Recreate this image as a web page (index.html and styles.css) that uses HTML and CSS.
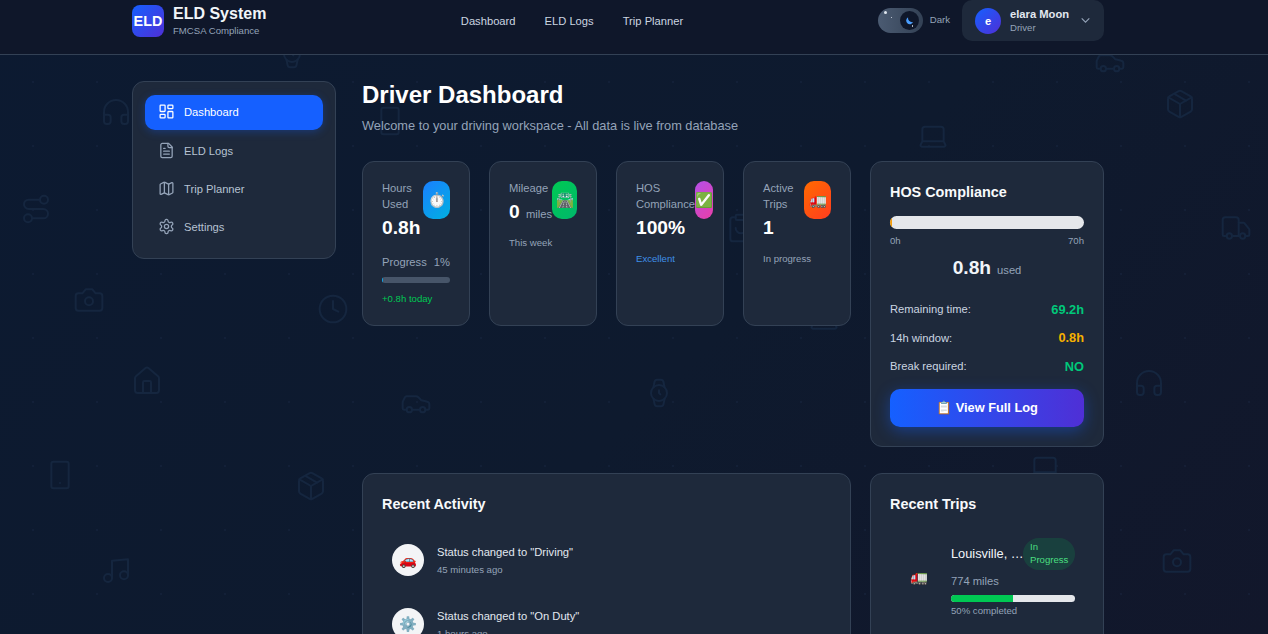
FILE: index.html
```html
<!DOCTYPE html>
<html lang="en">
<head>
<meta charset="utf-8">
<title>ELD System</title>
<link rel="stylesheet" href="styles.css">
</head>
<body>
<svg class="defs" width="0" height="0" aria-hidden="true">
  <symbol id="i-headphones" viewBox="0 0 24 24"><path d="M3 14h3a2 2 0 0 1 2 2v3a2 2 0 0 1-2 2H5a2 2 0 0 1-2-2v-7a9 9 0 0 1 18 0v7a2 2 0 0 1-2 2h-1a2 2 0 0 1-2-2v-3a2 2 0 0 1 2-2h3"/></symbol>
  <symbol id="i-box" viewBox="0 0 24 24"><path d="M21 8a2 2 0 0 0-1-1.73l-7-4a2 2 0 0 0-2 0l-7 4A2 2 0 0 0 3 8v8a2 2 0 0 0 1 1.73l7 4a2 2 0 0 0 2 0l7-4A2 2 0 0 0 21 16Z"/><path d="m3.3 7 8.7 5 8.7-5"/><path d="M12 22V12"/><path d="m7.5 4.27 9 5.15"/></symbol>
  <symbol id="i-route" viewBox="0 0 24 24"><circle cx="6" cy="19" r="3"/><path d="M9 19h8.5a3.5 3.5 0 0 0 0-7h-11a3.5 3.5 0 0 1 0-7H15"/><circle cx="18" cy="5" r="3"/></symbol>
  <symbol id="i-truck" viewBox="0 0 24 24"><path d="M14 18V6a2 2 0 0 0-2-2H4a2 2 0 0 0-2 2v11a1 1 0 0 0 1 1h2"/><path d="M15 18H9"/><path d="M19 18h2a1 1 0 0 0 1-1v-3.65a1 1 0 0 0-.22-.624l-3.48-4.35A1 1 0 0 0 17.52 8H14"/><circle cx="17" cy="18" r="2"/><circle cx="7" cy="18" r="2"/></symbol>
  <symbol id="i-camera" viewBox="0 0 24 24"><path d="M14.5 4h-5L7 7H4a2 2 0 0 0-2 2v9a2 2 0 0 0 2 2h16a2 2 0 0 0 2-2V9a2 2 0 0 0-2-2h-3l-2.5-3z"/><circle cx="12" cy="13" r="3"/></symbol>
  <symbol id="i-clock" viewBox="0 0 24 24"><circle cx="12" cy="12" r="10"/><path d="M12 6v6l4 2"/></symbol>
  <symbol id="i-clipboard" viewBox="0 0 24 24"><path d="M8 4H6a2 2 0 0 0-2 2v14a2 2 0 0 0 2 2h12a2 2 0 0 0 2-2V6a2 2 0 0 0-2-2h-2"/><rect x="8" y="2" width="8" height="4" rx="1"/><path d="M16 12a4 4 0 0 1-8 0"/></symbol>
  <symbol id="i-home" viewBox="0 0 24 24"><path d="M15 21v-8a1 1 0 0 0-1-1h-4a1 1 0 0 0-1 1v8"/><path d="M3 10a2 2 0 0 1 .709-1.528l7-5.999a2 2 0 0 1 2.582 0l7 5.999A2 2 0 0 1 21 10v9a2 2 0 0 1-2 2H5a2 2 0 0 1-2-2z"/></symbol>
  <symbol id="i-car" viewBox="0 0 24 24"><path d="M19 17h2c.6 0 1-.4 1-1v-3c0-.9-.7-1.7-1.5-1.9C18.7 10.6 16 10 16 10s-1.3-1.4-2.2-2.3c-.5-.4-1.1-.7-1.8-.7H5c-.6 0-1.1.4-1.4.9l-1.4 2.9A3.7 3.7 0 0 0 2 12v4c0 .6.4 1 1 1h2"/><circle cx="7" cy="17" r="2"/><path d="M9 17h6"/><circle cx="17" cy="17" r="2"/></symbol>
  <symbol id="i-watch" viewBox="0 0 24 24"><circle cx="12" cy="12" r="6"/><path d="M12 10v2l1 1"/><path d="m16.13 7.66-.81-4.05a2 2 0 0 0-2-1.61h-2.68a2 2 0 0 0-2 1.61l-.78 4.05"/><path d="m7.88 16.36.8 4a2 2 0 0 0 2 1.61h2.72a2 2 0 0 0 2-1.61l.81-4.05"/></symbol>
  <symbol id="i-phone" viewBox="0 0 24 24"><rect x="5.5" y="2" width="13" height="20" rx="1.5"/><path d="M12 18h.01"/></symbol>
  <symbol id="i-music" viewBox="0 0 24 24"><path d="M9 18V5l12-1v12"/><circle cx="6" cy="18" r="3"/><circle cx="18" cy="16" r="3"/></symbol>
  <symbol id="i-laptop" viewBox="0 0 24 24"><path d="M20 16V7a2 2 0 0 0-2-2H6a2 2 0 0 0-2 2v9m16 0H4m16 0 1.28 2.55a1 1 0 0 1-.9 1.45H3.62a1 1 0 0 1-.9-1.45L4 16"/></symbol>
</svg>

<div class="bg-icons" aria-hidden="true">
  <svg class="bgi p1"><use href="#i-watch"/></svg>
  <svg class="bgi p2"><use href="#i-car"/></svg>
  <svg class="bgi p3"><use href="#i-headphones"/></svg>
  <svg class="bgi p4"><use href="#i-box"/></svg>
  <svg class="bgi p5"><use href="#i-laptop"/></svg>
  <svg class="bgi p6"><use href="#i-route"/></svg>
  <svg class="bgi p7"><use href="#i-truck"/></svg>
  <svg class="bgi p8"><use href="#i-camera"/></svg>
  <svg class="bgi p9"><use href="#i-clock"/></svg>
  <svg class="bgi p10"><use href="#i-home"/></svg>
  <svg class="bgi p11"><use href="#i-car"/></svg>
  <svg class="bgi p12"><use href="#i-watch"/></svg>
  <svg class="bgi p13"><use href="#i-headphones"/></svg>
  <svg class="bgi p14"><use href="#i-phone"/></svg>
  <svg class="bgi p15"><use href="#i-box"/></svg>
  <svg class="bgi p16"><use href="#i-music"/></svg>
  <svg class="bgi p17"><use href="#i-camera"/></svg>
  <svg class="bgi p18"><use href="#i-laptop"/></svg>
  <svg class="bgi p19"><use href="#i-laptop"/></svg>
  <svg class="bgi p20"><use href="#i-clipboard"/></svg>
  <svg class="bgi p21"><use href="#i-phone"/></svg>
</div>

<header class="topbar">
  <div class="topbar-inner">
    <div class="brand">
      <div class="brand-logo">ELD</div>
      <div class="brand-text">
        <div class="brand-name">ELD System</div>
        <div class="brand-sub">FMCSA Compliance</div>
      </div>
    </div>
    <nav class="topnav">
      <a>Dashboard</a>
      <a>ELD Logs</a>
      <a>Trip Planner</a>
    </nav>
    <div class="top-right">
      <div class="theme">
        <div class="toggle">
          <span class="star star-a"></span>
          <span class="star star-b"></span>
          <span class="knob">
            <svg viewBox="0 0 24 24" class="moon"><path d="M20 15.5A9 9 0 0 1 9 5a8 8 0 1 0 11 10.5z"/></svg>
            <span class="star star-c"></span>
          </span>
        </div>
        <span class="theme-label">Dark</span>
      </div>
      <div class="user">
        <div class="avatar">e</div>
        <div class="user-text">
          <div class="user-name">elara Moon</div>
          <div class="user-role">Driver</div>
        </div>
        <svg class="chev" viewBox="0 0 24 24"><path d="m5 8 7 7 7-7"/></svg>
      </div>
    </div>
  </div>
</header>

<div class="layout">
  <aside class="sidebar">
    <a class="side-item active">
      <svg viewBox="0 0 24 24"><rect x="3" y="3" width="7" height="9" rx="1"/><rect x="14" y="3" width="7" height="5" rx="1"/><rect x="14" y="12" width="7" height="9" rx="1"/><rect x="3" y="16" width="7" height="5" rx="1"/></svg>
      Dashboard
    </a>
    <a class="side-item">
      <svg viewBox="0 0 24 24"><path d="M15 2H6a2 2 0 0 0-2 2v16a2 2 0 0 0 2 2h12a2 2 0 0 0 2-2V7Z"/><path d="M14 2v4a2 2 0 0 0 2 2h4"/><path d="M10 9H8"/><path d="M16 13H8"/><path d="M16 17H8"/></svg>
      ELD Logs
    </a>
    <a class="side-item">
      <svg viewBox="0 0 24 24"><path d="M14.106 5.553a2 2 0 0 0 1.788 0l3.659-1.83A1 1 0 0 1 21 4.619v12.764a1 1 0 0 1-.553.894l-4.553 2.277a2 2 0 0 1-1.788 0l-4.212-2.106a2 2 0 0 0-1.788 0l-3.659 1.83A1 1 0 0 1 3 19.381V6.618a1 1 0 0 1 .553-.894l4.553-2.277a2 2 0 0 1 1.788 0z"/><path d="M15 5.764v15"/><path d="M9 3.236v15"/></svg>
      Trip Planner
    </a>
    <a class="side-item">
      <svg viewBox="0 0 24 24"><path d="M12.22 2h-.44a2 2 0 0 0-2 2v.18a2 2 0 0 1-1 1.73l-.43.25a2 2 0 0 1-2 0l-.15-.08a2 2 0 0 0-2.73.73l-.22.38a2 2 0 0 0 .73 2.73l.15.1a2 2 0 0 1 1 1.72v.51a2 2 0 0 1-1 1.74l-.15.09a2 2 0 0 0-.73 2.73l.22.38a2 2 0 0 0 2.73.73l.15-.08a2 2 0 0 1 2 0l.43.25a2 2 0 0 1 1 1.73V20a2 2 0 0 0 2 2h.44a2 2 0 0 0 2-2v-.18a2 2 0 0 1 1-1.73l.43-.25a2 2 0 0 1 2 0l.15.08a2 2 0 0 0 2.73-.73l.22-.39a2 2 0 0 0-.73-2.73l-.15-.08a2 2 0 0 1-1-1.74v-.5a2 2 0 0 1 1-1.74l.15-.09a2 2 0 0 0 .73-2.73l-.22-.38a2 2 0 0 0-2.73-.73l-.15.08a2 2 0 0 1-2 0l-.43-.25a2 2 0 0 1-1-1.73V4a2 2 0 0 0-2-2z"/><circle cx="12" cy="12" r="3"/></svg>
      Settings
    </a>
  </aside>

  <main class="main">
    <h1 class="page-title">Driver Dashboard</h1>
    <p class="page-sub">Welcome to your driving workspace - All data is live from database</p>

    <div class="grid">
      <div class="stats">
        <section class="card stat">
          <div class="stat-top">
            <div class="stat-text">
              <div class="stat-label">Hours Used</div>
              <div class="stat-value">0.8h</div>
            </div>
            <div class="stat-icon blue">⏱️</div>
          </div>
          <div class="progress-row"><span>Progress</span><span>1%</span></div>
          <div class="stat-bar"><div class="stat-fill"></div></div>
          <div class="stat-note green">+0.8h today</div>
        </section>
        <section class="card stat">
          <div class="stat-top">
            <div class="stat-text">
              <div class="stat-label">Mileage</div>
              <div class="stat-value">0 <small>miles</small></div>
            </div>
            <div class="stat-icon emerald">🛣️</div>
          </div>
          <div class="stat-note tight">This week</div>
        </section>
        <section class="card stat">
          <div class="stat-top">
            <div class="stat-text">
              <div class="stat-label">HOS Compliance</div>
              <div class="stat-value">100%</div>
            </div>
            <div class="stat-icon purple">✅</div>
          </div>
          <div class="stat-note azure">Excellent</div>
        </section>
        <section class="card stat">
          <div class="stat-top">
            <div class="stat-text">
              <div class="stat-label">Active Trips</div>
              <div class="stat-value">1</div>
            </div>
            <div class="stat-icon orange">🚛</div>
          </div>
          <div class="stat-note">In progress</div>
        </section>
      </div>

      <section class="card hos">
        <h2 class="card-title">HOS Compliance</h2>
        <div class="hos-bar"><div class="hos-fill"></div></div>
        <div class="hos-scale"><span>0h</span><span>70h</span></div>
        <div class="hos-used"><strong>0.8h</strong><span>used</span></div>
        <div class="hos-rows">
          <div class="hos-row"><span>Remaining time:</span><b class="v-green">69.2h</b></div>
          <div class="hos-row"><span>14h window:</span><b class="v-amber">0.8h</b></div>
          <div class="hos-row"><span>Break required:</span><b class="v-green">NO</b></div>
        </div>
        <button class="btn">📋 View Full Log</button>
      </section>

      <section class="card activity">
        <h2 class="card-title">Recent Activity</h2>
        <div class="act-item">
          <div class="act-icon">🚗</div>
          <div>
            <div class="act-title">Status changed to "Driving"</div>
            <div class="act-time">45 minutes ago</div>
          </div>
        </div>
        <div class="act-item">
          <div class="act-icon">⚙️</div>
          <div>
            <div class="act-title">Status changed to "On Duty"</div>
            <div class="act-time">1 hours ago</div>
          </div>
        </div>
      </section>

      <section class="card trips">
        <h2 class="card-title">Recent Trips</h2>
        <div class="trip">
          <div class="trip-icon">🚛</div>
          <div class="trip-body">
            <div class="trip-head">
              <span class="trip-name">Louisville, KY to Nashville, TN</span>
              <span class="badge">In Progress</span>
            </div>
            <div class="trip-miles">774 miles</div>
            <div class="trip-bar"><div class="trip-fill"></div></div>
            <div class="trip-done">50% completed</div>
          </div>
        </div>
      </section>
    </div>
  </main>
</div>
</body>
</html>
```
FILE: styles.css
```css
* { box-sizing: border-box; }
html, body { height: 634px; overflow: hidden; }
body {
  margin: 0;
  position: relative;
  font-family: "Liberation Sans", Arial, sans-serif;
  color: #fff;
  background-color: #0e1a30;
  background-image:
    radial-gradient(circle at 33px 18px, rgba(35, 52, 84, .25) 0, rgba(35, 52, 84, .25) 1px, transparent 1.5px),
    linear-gradient(135deg, #0c1a31 0%, #0e1a2e 55%, #12172b 100%);
  background-size: 64px 64px, 100% 100%;
}
.defs { position: absolute; }

.bg-icons { position: absolute; inset: 0; overflow: hidden; }
.bgi {
  position: absolute;
  width: 32px;
  height: 32px;
  fill: none;
  stroke: #15263f;
  stroke-width: 1.5;
  stroke-linecap: round;
  stroke-linejoin: round;
}
.p1 { left: 276px; top: 38px; }
.p2 { left: 1094px; top: 46px; }
.p3 { left: 100px; top: 96px; }
.p4 { left: 1164px; top: 88px; }
.p5 { left: 917px; top: 120px; }
.p6 { left: 20px; top: 193px; }
.p7 { left: 1220px; top: 212px; }
.p8 { left: 73px; top: 284px; }
.p9 { left: 317px; top: 293px; }
.p10 { left: 131px; top: 365px; }
.p11 { left: 400px; top: 387px; }
.p12 { left: 643px; top: 377px; }
.p13 { left: 1133px; top: 367px; }
.p14 { left: 44px; top: 459px; }
.p15 { left: 295px; top: 470px; }
.p16 { left: 100px; top: 554px; }
.p17 { left: 1161px; top: 545px; }
.p18 { left: 808px; top: 302px; }
.p19 { left: 1029px; top: 451px; }
.p20 { left: 725px; top: 212px; }
.p21 { left: 374px; top: 105px; }

.topbar {
  position: relative;
  height: 55px;
  background: #0f172a;
  border-bottom: 1px solid #334155;
}
.topbar-inner {
  width: 972px;
  height: 41px;
  margin-left: 132px;
  display: grid;
  grid-template-columns: 1fr auto 1fr;
  align-items: center;
}
.brand { display: flex; align-items: center; gap: 9px; }
.brand-logo {
  width: 32px;
  height: 32px;
  border-radius: 8px;
  background: linear-gradient(135deg, #1560ff, #4f2fd6);
  display: flex;
  align-items: center;
  justify-content: center;
  font-size: 14.4px;
  font-weight: 700;
}
.brand-text { padding-top: 1px; }
.brand-name { font-size: 16px; font-weight: 700; line-height: 18px; color: #f1f5f9; }
.brand-sub { font-size: 9.6px; line-height: 12px; margin-top: 2px; color: #94a3b8; }

.topnav { display: flex; gap: 29px; font-size: 11.2px; color: #cbd5e1; margin-right: 92px; }

.top-right { display: flex; align-items: center; justify-content: flex-end; gap: 12px; }
.theme { display: flex; align-items: center; gap: 7px; }
.toggle {
  position: relative;
  width: 45px;
  height: 25px;
  border-radius: 13px;
  background: linear-gradient(90deg, #4b5b72, #334155);
}
.knob {
  position: absolute;
  left: 22px;
  top: 3px;
  width: 19px;
  height: 19px;
  border-radius: 50%;
  background: #0f172a;
  display: flex;
  align-items: center;
  justify-content: center;
}
.moon { width: 11px; height: 11px; fill: #4a9eff; }
.star { position: absolute; background: #e2e8f0; border-radius: 50%; }
.star-a { left: 6px; top: 3px; width: 3px; height: 3px; }
.star-b { left: 13px; top: 9px; width: 1px; height: 1px; }
.star-c { left: 12px; top: 14px; width: 1px; height: 2px; }
.theme-label { font-size: 9.6px; color: #94a3b8; padding-bottom: 2px; }
.user {
  width: 142px;
  height: 41px;
  padding: 0 13px;
  display: flex;
  align-items: center;
  gap: 9px;
  background: #1e293b;
  border-radius: 10px;
}
.avatar {
  width: 26px;
  height: 26px;
  border-radius: 50%;
  background: linear-gradient(135deg, #1560ff, #4f2fd6);
  display: flex;
  align-items: center;
  justify-content: center;
  font-size: 11.2px;
  font-weight: 700;
}
.user-name { font-size: 11.2px; font-weight: 700; line-height: 14px; color: #e2e8f0; white-space: nowrap; }
.user-role { font-size: 9.6px; line-height: 12px; margin-top: 1px; color: #94a3b8; }
.chev {
  width: 13px;
  height: 13px;
  margin-left: auto;
  margin-right: -1px;
  fill: none;
  stroke: #94a3b8;
  stroke-width: 2;
}

.layout {
  position: relative;
  width: 972px;
  margin: 26px 0 0 132px;
  display: flex;
  align-items: flex-start;
  gap: 26px;
}
.sidebar {
  width: 204px;
  flex: none;
  padding: 13px 12px 13px;
  background: #1e293b;
  border: 1px solid #334155;
  border-radius: 12px;
  display: flex;
  flex-direction: column;
  gap: 3px;
}
.side-item {
  height: 35px;
  padding: 0 12.5px 2px;
  border-radius: 10px;
  display: flex;
  align-items: center;
  gap: 9.5px;
  font-size: 11.2px;
  color: #b6c2d2;
}
.side-item svg {
  width: 17px;
  height: 17px;
  flex: none;
  fill: none;
  stroke: #94a3b8;
  stroke-width: 1.8;
  stroke-linecap: round;
  stroke-linejoin: round;
}
.side-item.active {
  background: #1560ff;
  color: #fff;
  box-shadow: 0 2px 8px rgba(21, 96, 255, .3);
  margin-bottom: 1px;
}
.side-item.active svg { stroke: #fff; }

.main { flex: 1; min-width: 0; }
.page-title { margin: 0; font-size: 24px; line-height: 28px; font-weight: 700; }
.page-sub { margin: 8px 0 0; font-size: 12.8px; line-height: 18px; color: #94a3b8; }

.grid {
  margin-top: 26px;
  display: grid;
  grid-template-columns: 489px 234px;
  column-gap: 19px;
  row-gap: 26px;
  align-items: start;
}
.card {
  background: #1e293b;
  border: 1px solid #334155;
  border-radius: 12px;
  padding: 19px;
}
.stats {
  display: grid;
  grid-template-columns: repeat(4, 108px);
  column-gap: 19px;
  height: 165px;
}
.stat { height: 165px; }
.stat-top { display: flex; justify-content: space-between; }
.stat-text { flex: 0 1 auto; margin-top: -1px; }
.stat-label { font-size: 11.2px; line-height: 16px; color: #94a3b8; }
.stat-value { font-size: 19.2px; font-weight: 700; line-height: 24px; margin-top: 4px; white-space: nowrap; }
.stat-value small { font-size: 11.2px; font-weight: 400; color: #94a3b8; margin-left: 1px; }
.stat-icon {
  flex: 0 1 38px;
  height: 38px;
  border-radius: 10px;
  display: flex;
  align-items: center;
  justify-content: center;
  font-size: 14.4px;
}
.blue { background: linear-gradient(135deg, #1a7fff, #00b0e0); }
.emerald { background: linear-gradient(135deg, #00c853, #00b86b); }
.purple { background: linear-gradient(135deg, #b44fe8, #e83fa8); }
.orange { background: linear-gradient(135deg, #ff6a00, #ff3d1f); }
.progress-row {
  display: flex;
  justify-content: space-between;
  margin-top: 14px;
  font-size: 11.2px;
  line-height: 16px;
  color: #94a3b8;
}
.stat-bar { margin-top: 7px; height: 6px; border-radius: 3px; background: #475569; overflow: hidden; }
.stat-fill { width: 1%; height: 100%; background: #0ea5e9; }
.stat-note { margin-top: 13px; font-size: 9.6px; line-height: 12px; color: #94a3b8; }
.stat-note.tight { margin-top: 11px; }
.progress-row + .stat-bar + .stat-note { margin-top: 10px; color: #00c853; }
.azure { color: #3f8fe8; }

.hos { grid-column: 2; grid-row: 1; height: 286px; }
.card-title { margin: 2px 0 0; font-size: 14.4px; line-height: 18px; font-weight: 700; color: #f8fafc; }
.hos-bar { margin-top: 15px; height: 13px; border-radius: 7px; background: #e5e7eb; overflow: hidden; }
.hos-fill { width: 1.14%; height: 100%; background: #f59e0b; }
.hos-scale {
  display: flex;
  justify-content: space-between;
  margin-top: 6px;
  font-size: 9.6px;
  line-height: 12px;
  color: #94a3b8;
}
.hos-used { margin-top: 8px; display: flex; justify-content: center; align-items: baseline; gap: 6px; line-height: 26px; }
.hos-used strong { font-size: 19.2px; color: #f1f5f9; }
.hos-used span { font-size: 11.2px; color: #94a3b8; }
.hos-rows { margin-top: 12px; display: flex; flex-direction: column; }
.hos-row { height: 28.5px; display: flex; justify-content: space-between; align-items: center; font-size: 11.2px; color: #cbd5e1; }
.hos-row b { font-size: 12.8px; }
.v-green { color: #00c87a; }
.v-amber { color: #f5b000; }
.btn {
  display: block;
  width: 100%;
  height: 38px;
  margin-top: 8px;
  border: 0;
  border-radius: 10px;
  background: linear-gradient(90deg, #1560ff, #4f2fd6);
  box-shadow: 0 4px 15px rgba(21, 96, 255, .4);
  color: #fff;
  font: 700 12.8px "Liberation Sans", Arial, sans-serif;
}

.activity { grid-column: 1; grid-row: 2; height: 300px; }
.act-item { display: flex; align-items: center; gap: 13px; height: 64px; padding-left: 10px; }
.card-title + .act-item { margin-top: 15px; }
.act-icon {
  width: 32px;
  height: 32px;
  flex: none;
  border-radius: 50%;
  background: #f3f4f6;
  display: flex;
  align-items: center;
  justify-content: center;
  font-size: 14.4px;
}
.act-title { font-size: 11.2px; line-height: 16px; color: #e2e8f0; }
.act-time { font-size: 9.6px; line-height: 12px; margin-top: 4px; color: #94a3b8; }

.trips { grid-column: 2; grid-row: 2; height: 300px; }
.trip { display: flex; align-items: center; gap: 13px; margin-top: 25px; padding: 0 9px 0 10px; }
.trip-icon { width: 38px; flex: none; text-align: center; font-size: 14.4px; }
.trip-body { flex: 1; min-width: 0; }
.trip-head { display: flex; align-items: center; }
.trip-name {
  flex: 1;
  min-width: 0;
  padding-bottom: 2px;
  font-size: 12.8px;
  white-space: nowrap;
  overflow: hidden;
  text-overflow: ellipsis;
  color: #f1f5f9;
}
.badge {
  flex: none;
  width: 52px;
  height: 32px;
  margin-left: -2px;
  padding: 2px 7px;
  border-radius: 16px;
  background: rgba(0, 200, 83, .15);
  font-size: 9.6px;
  line-height: 13px;
  color: #4ade80;
}
.trip-miles { margin-top: 4px; font-size: 11.2px; line-height: 14px; color: #94a3b8; }
.trip-bar { margin-top: 7px; height: 7px; border-radius: 4px; background: #e5e7eb; overflow: hidden; }
.trip-fill { width: 50%; height: 100%; background: #00c853; }
.trip-done { margin-top: 3px; font-size: 9.6px; line-height: 12px; color: #94a3b8; }
```
